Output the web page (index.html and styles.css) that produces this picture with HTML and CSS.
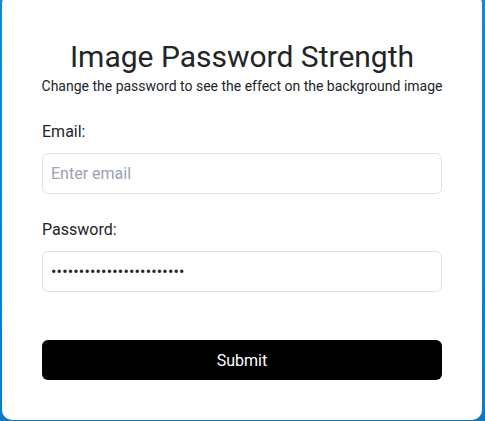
FILE: index.html
```html
<!DOCTYPE html>
<html>
<head>
<meta charset="utf-8">
<link rel="stylesheet" href="styles.css">
</head>
<body>
<div class="card">
  <h1 class="title">Image Password Strength</h1>
  <p class="subtitle">Change the password to see the effect on the background image</p>
  <form class="form">
    <div class="group">
      <label class="label" for="email">Email:</label>
      <input class="input" id="email" type="email" placeholder="Enter email">
    </div>
    <div class="group">
      <label class="label" for="pw">Password:</label>
      <input class="input input-pw" id="pw" type="password" value="aaaaaaaaaaaaaaaaaaaaaaaa">
    </div>
    <button class="submit" type="button">Submit</button>
  </form>
</div>
</body>
</html>
```
FILE: styles.css
```css
html, body {
  margin: 0;
  padding: 0;
  height: 100%;
  overflow: hidden;
}
body {
  background: linear-gradient(180deg, #1a86cf 0%, #0a7fcb 80%, #0d78c4 100%);
  font-family: Roboto, "Liberation Sans", sans-serif;
  color: #212529;
}
.card {
  box-sizing: border-box;
  width: 480px;
  margin: -6px 0 0 2px;
  background: #fff;
  border-radius: 10px;
  padding: 44.5px 40px 40px;
}
.title {
  margin: 0;
  font-size: 30px;
  font-weight: 400;
  line-height: 36px;
  text-align: center;
}
.subtitle {
  margin: 1px -10px 0;
  font-size: 14px;
  line-height: 21px;
  text-align: center;
  white-space: nowrap;
}
.form {
  margin-top: 23.5px;
  display: flex;
  flex-direction: column;
}
.group {
  display: flex;
  flex-direction: column;
  margin-bottom: 24px;
}
.group + .group {
  margin-bottom: 48px;
}
.label {
  font-size: 16px;
  line-height: 24px;
  margin-bottom: 9px;
}
.input {
  box-sizing: border-box;
  height: 41px;
  border: 1px solid #dee2e6;
  border-radius: 6px;
  padding: 0 8px;
  font-family: Roboto, "Liberation Sans", sans-serif;
  font-size: 16px;
  color: #212529;
  outline: none;
}
.input-pw {
  letter-spacing: 0.17px;
}
.input::placeholder {
  color: #9aa3b1;
}
.submit {
  height: 40px;
  border: none;
  border-radius: 6px;
  background: #000;
  color: #fff;
  font-family: Roboto, "Liberation Sans", sans-serif;
  font-size: 16px;
}
```
